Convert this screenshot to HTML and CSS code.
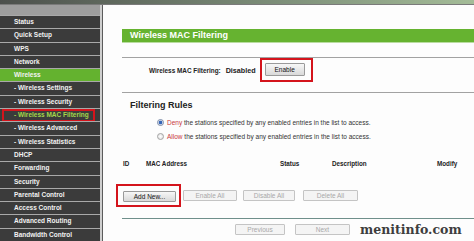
FILE: index.html
```html
<!DOCTYPE html>
<html lang="en">
<head>
    <meta charset="UTF-8">
    <title>Wireless MAC Filtering</title>
    <link rel="stylesheet" href="styles.css">
</head>
<body>
    <div class="topbar"></div>
    <div class="main">
        <ul class="menu">
            <li class="menu-head"></li>
            <li>Status</li>
            <li>Quick Setup</li>
            <li>WPS</li>
            <li>Network</li>
            <li class="open">Wireless</li>
            <li>- Wireless Settings</li>
            <li>- Wireless Security</li>
            <li class="current">- Wireless MAC Filtering</li>
            <li>- Wireless Advanced</li>
            <li>- Wireless Statistics</li>
            <li>DHCP</li>
            <li>Forwarding</li>
            <li>Security</li>
            <li>Parental Control</li>
            <li>Access Control</li>
            <li>Advanced Routing</li>
            <li>Bandwidth Control</li>
        </ul>

        <div class="content">
            <div class="title-bar">Wireless MAC Filtering</div>
            <hr class="rule first">

            <div class="status-row">
                <span class="status-label">Wireless MAC Filtering:</span>
                <span class="status-value">Disabled</span>
                <span class="mark mark-enable"><button class="btn btn-enable">Enable</button></span>
            </div>

            <hr class="rule second">

            <h2>Filtering Rules</h2>
            <div class="opt opt-first">
                <span class="radio checked"></span>
                <span><em>Deny</em> the stations specified by any enabled entries in the list to access.</span>
            </div>
            <div class="opt">
                <span class="radio"></span>
                <span><em>Allow</em> the stations specified by any enabled entries in the list to access.</span>
            </div>

            <div class="table-head">
                <span>ID</span>
                <span>MAC Address</span>
                <span>Status</span>
                <span>Description</span>
                <span>Modify</span>
            </div>

            <div class="actions">
                <span class="mark mark-add"><button class="btn btn-add">Add New...</button></span>
                <button class="btn off btn-enable-all">Enable All</button>
                <button class="btn off btn-disable-all">Disable All</button>
                <button class="btn off btn-delete-all">Delete All</button>
            </div>

            <hr class="rule bottom">

            <div class="pager">
                <button class="btn off btn-prev">Previous</button>
                <button class="btn off btn-next">Next</button>
                <span class="watermark">menitinfo.com</span>
            </div>
        </div>
    </div>
</body>
</html>
```

FILE: styles.css
```css
body {
    margin: 0;
    font-family: "Liberation Sans", Arial, sans-serif;
    background-color: #fff;
    overflow: hidden;
}
.topbar {
    height: 4px;
    background: linear-gradient(to right, #4c504c, #7e907a 60%, #a4bc98);
    border-bottom: 1px solid #7a7a7a;
}
.main {
    display: flex;
    height: 236px;
}
.menu {
    list-style: none;
    margin: 0;
    padding: 0;
    width: 100px;
    flex: none;
    background-color: #3b3b3b;
    border-right: 2px solid #cfcfcf;
}
.menu li {
    position: relative;
    box-sizing: border-box;
    height: 13.3px;
    line-height: 12.3px;
    padding-left: 14px;
    border-top: 1px solid #a9a9a9;
    color: #f2f2f2;
    font-size: 6.5px;
    font-weight: bold;
    white-space: nowrap;
}
.menu li.menu-head {
    height: 10px;
    border-top: none;
    background-color: #9e9e9e;
}
.menu li.open {
    background-color: #64b22f;
}
.menu li.current {
    color: #a6d64a;
}
.menu li.current::after {
    content: "";
    position: absolute;
    top: 0;
    bottom: -1px;
    left: 2px;
    right: 5px;
    border: 2px solid #d4141c;
}
.content {
    flex: 1;
    min-width: 0;
    border-left: 1px solid #5c5c5c;
    padding-left: 19px;
    background-color: #fdfdfd;
}
.title-bar {
    margin-top: 24px;
    height: 13px;
    line-height: 13px;
    padding-left: 8px;
    background-color: #66b330;
    border-bottom: 1px solid #b9dca0;
    color: #fff;
    font-size: 9px;
    font-weight: bold;
}
.rule {
    height: 0;
    border: 0;
    border-top: 1px solid #a2a2a2;
    margin: 0;
}
.rule.first {
    margin-top: 14px;
}
.rule.second {
    margin-top: 10px;
}
.rule.bottom {
    margin-top: 11px;
    border-top-color: #6f8f8b;
}
.status-row {
    display: flex;
    align-items: center;
    height: 24px;
    padding-left: 27px;
    font-weight: bold;
    color: #222;
}
.status-label {
    font-size: 6.4px;
}
.status-value {
    margin-left: 5px;
    font-size: 7.2px;
}
.mark {
    display: inline-flex;
    border: 2px solid #d4141c;
}
.mark-enable {
    margin-left: 4px;
    padding: 3px 6px 4px 3px;
}
.btn {
    box-sizing: border-box;
    padding: 0;
    font-family: "Liberation Sans", Arial, sans-serif;
    font-size: 6.5px;
    color: #111;
    border: 1px solid #9a9a9a;
    border-radius: 1px;
    background: linear-gradient(#f7f7f7, #d9d9d9);
}
.btn.off {
    color: #a8a8a8;
    border-color: #c4c4c4;
    background: #f4f4f4;
}
.btn-enable {
    width: 40px;
    height: 13px;
}
h2 {
    margin: 6px 0 0 8px;
    font-size: 9px;
    line-height: 12px;
    color: #222;
}
.opt {
    display: flex;
    align-items: center;
    gap: 3px;
    height: 14px;
    padding-left: 35px;
    font-size: 6.5px;
    color: #333;
}
.opt-first {
    margin-top: 4px;
}
.opt em {
    font-style: normal;
    color: #c8383c;
}
.radio {
    box-sizing: border-box;
    width: 7px;
    height: 7px;
    border-radius: 50%;
    border: 1px solid #a4a4a4;
    background: radial-gradient(#fff, #dcdcdc);
}
.radio.checked {
    background: radial-gradient(#3566b8 0, #3566b8 1.4px, #e4e8f0 2.2px);
    border-color: #7c8ca8;
}
.table-head {
    display: grid;
    grid-template-columns: 23px 134px 52px 105px auto;
    margin-top: 15px;
    height: 12px;
    line-height: 12px;
    padding-left: 1px;
    font-size: 6.3px;
    font-weight: bold;
    color: #222;
}
.actions {
    display: flex;
    align-items: center;
    margin: 14px 0 0 -6px;
    height: 23px;
}
.mark-add {
    padding: 5px 3px 3px 5px;
}
.btn-add {
    width: 53px;
    height: 11px;
}
.btn-enable-all {
    margin-left: 2px;
    width: 54px;
    height: 11px;
}
.btn-disable-all {
    margin-left: 6px;
    width: 52px;
    height: 11px;
}
.btn-delete-all {
    margin-left: 8px;
    width: 55px;
    height: 11px;
}
.pager {
    display: flex;
    align-items: center;
    margin-top: 4px;
    padding-left: 113px;
    height: 12px;
}
.btn-prev {
    width: 50px;
    height: 11px;
}
.btn-next {
    margin-left: 10px;
    width: 55px;
    height: 11px;
}
.watermark {
    margin-left: 10px;
    font-family: "DejaVu Serif", serif;
    font-weight: bold;
    font-size: 12.5px;
    color: #3e3e3e;
    white-space: nowrap;
}
```
